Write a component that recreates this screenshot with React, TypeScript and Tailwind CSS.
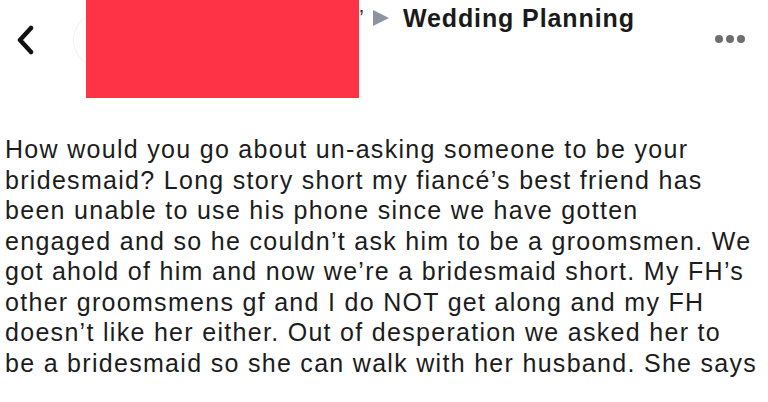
const lines = [
  'How would you go about un-asking someone to be your',
  'bridesmaid? Long story short my fiancé’s best friend has',
  'been unable to use his phone since we have gotten',
  'engaged and so he couldn’t ask him to be a groomsmen. We',
  'got ahold of him and now we’re a bridesmaid short. My FH’s',
  'other groomsmens gf and I do NOT get along and my FH',
  'doesn’t like her either. Out of desperation we asked her to',
  'be a bridesmaid so she can walk with her husband. She says',
]

export default function App() {
  return (
    <div className="h-[402px] w-[768px] overflow-hidden bg-white font-['Liberation_Sans',Arial,sans-serif] text-[#1c1c1c]">
      {/* Header */}
      <div className="flex h-[134px] items-start">
        <div className="ml-[15px] mt-[25px] w-[20px]">
          <svg width="20" height="30" viewBox="0 0 20 30" fill="none">
            <path d="M16 3 L5 15 L16 27" stroke="#111" strokeWidth="4.5" strokeLinecap="round" strokeLinejoin="round" />
          </svg>
        </div>

        <div className="relative ml-[51px] h-[98px] w-[273px]">
          <div className="absolute left-[-13px] top-[12px] h-[56px] w-[56px] rounded-full border border-[#eef0f2]" />
          <div className="absolute inset-0 bg-[#fe3346]" />
        </div>

        <div className="mt-[5px] flex items-center">
          <span className="text-[22px] leading-[26px] text-[#333]">’</span>
          <svg className="ml-[8px]" width="18" height="18" viewBox="0 0 18 18">
            <path d="M1 1 L17 9 L1 17 Z" fill="#8d93a1" />
          </svg>
          <span className="ml-[13px] text-[25px] font-bold leading-[26px] tracking-[0.9px] text-[#1a1a1a]">Wedding Planning</span>
        </div>

        <div className="ml-auto mr-[23px] mt-[35px] flex gap-[3px]">
          <span className="h-[8px] w-[8px] rounded-full bg-[#6e6e6e]" />
          <span className="h-[8px] w-[8px] rounded-full bg-[#6e6e6e]" />
          <span className="h-[8px] w-[8px] rounded-full bg-[#6e6e6e]" />
        </div>
      </div>

      {/* Post body */}
      <div className="pl-[5px] text-[25px] leading-[30.5px] tracking-[1.3px]">
        {lines.map((line, i) => (
          <p key={i} className="whitespace-nowrap">{line}</p>
        ))}
      </div>
    </div>
  )
}
